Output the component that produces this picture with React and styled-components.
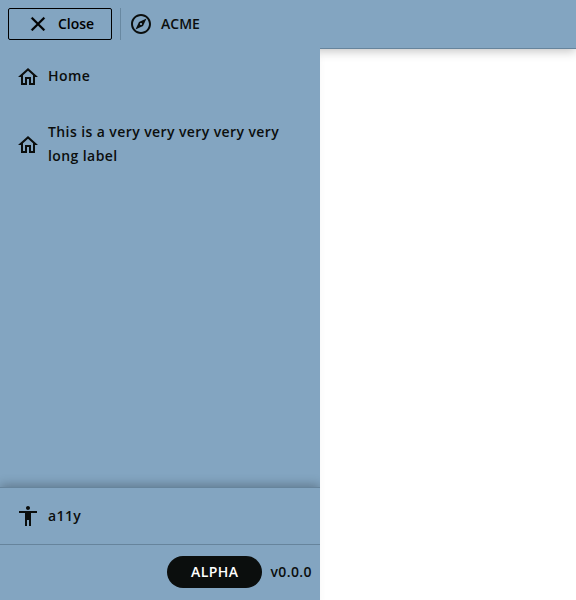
import React from "react";
import styled, { createGlobalStyle } from "styled-components";

const Global = createGlobalStyle`
  *, *::before, *::after { box-sizing: border-box; }
  body {
    margin: 0;
    background: #fff;
    color: #0b0e0d;
    font-family: "Open Sans", "Noto Sans", sans-serif;
    font-size: 14px;
    font-weight: 600;
  }
`;

const Page = styled.div`
  display: grid;
  grid-template-rows: 49px 1fr;
  height: 100vh;
  overflow: hidden;
`;

const Header = styled.header`
  display: flex;
  align-items: center;
  padding: 0 8px;
  background: #83a5c1;
  border-bottom: 1px solid #66849c;
  box-shadow: 0 2px 10px rgba(0, 0, 0, 0.25);
`;

const CloseButton = styled.button`
  display: flex;
  align-items: center;
  justify-content: center;
  gap: 8px;
  width: 104px;
  height: 32px;
  padding: 0;
  border: 1px solid #000;
  border-radius: 2px;
  background: transparent;
  color: #000;
  font: inherit;
  line-height: 20px;
`;

const Divider = styled.span`
  width: 1px;
  height: 32px;
  margin: 0 8px;
  background: #6888a1;
`;

const Brand = styled.div`
  display: flex;
  align-items: center;
  gap: 8px;
  line-height: 20px;
`;

const Label = styled.span`
  padding-bottom: 1px;
`;

const Icon = styled.svg`
  flex: none;
  width: 24px;
  height: 24px;
  fill: currentColor;
  stroke: currentColor;
  stroke-width: ${({ $stroke }) => $stroke || 0};
`;

const Drawer = styled.aside`
  display: flex;
  flex-direction: column;
  width: 320px;
  min-height: 0;
  margin-top: -1px;
  z-index: 1;
  background: #83a5c1;
  box-shadow: 0 8px 8px rgba(0, 0, 0, 0.04);
`;

const Nav = styled.nav`
  flex: 1;
`;

const NavItem = styled.a`
  display: flex;
  align-items: center;
  gap: 8px;
  padding: 16px;
  line-height: 24px;
  letter-spacing: 0.41px;
`;

const Footer = styled.div`
  border-top: 1px solid #66849c;
  box-shadow: 0 -2px 10px rgba(0, 0, 0, 0.28);
  clip-path: inset(-16px 0 0 0);
`;

const VersionBar = styled.div`
  display: flex;
  align-items: center;
  justify-content: flex-end;
  gap: 8px;
  height: 56px;
  padding: 0 8px 1px;
  border-top: 1px solid #66849c;
  letter-spacing: 0.41px;
`;

const Version = styled.span`
  line-height: 32px;
`;

const Badge = styled.span`
  height: 32px;
  padding: 0 24px;
  border-radius: 16px;
  background: #0b0e0d;
  color: #fff;
  line-height: 32px;
`;

const icons = {
  close: {
    stroke: 0.2,
    d: "M19 6.41 17.59 5 12 10.59 6.41 5 5 6.41 10.59 12 5 17.59 6.41 19 12 13.41 17.59 19 19 17.59 13.41 12z",
  },
  explore: {
    d: "M12 2C6.48 2 2 6.48 2 12s4.48 10 10 10 10-4.48 10-10S17.52 2 12 2zm0 18c-4.41 0-8-3.59-8-8s3.59-8 8-8 8 3.59 8 8-3.59 8-8 8zm-5.5-2.5 7.51-3.49L17.5 6.5 9.99 9.99 6.5 17.5zm5.5-6.6c.61 0 1.1.49 1.1 1.1s-.49 1.1-1.1 1.1-1.1-.49-1.1-1.1.49-1.1 1.1-1.1z",
  },
  home: {
    viewBox: "0 -1 24 24",
    d: "m12 5.69 5 4.5V18h-2v-6H9v6H7v-7.81l5-4.5M12 3 2 12h3v8h6v-6h2v6h6v-8h3L12 3z",
  },
  person: {
    d: "M12 2c1.1 0 2 .9 2 2s-.9 2-2 2-2-.9-2-2 .9-2 2-2zm9 7h-6v13h-2v-6h-2v6H9V9H3V7h18v2z",
  },
};

const Glyph = ({ name }) => {
  const { d, viewBox = "0 0 24 24", stroke } = icons[name];
  return (
    <Icon viewBox={viewBox} $stroke={stroke} aria-hidden="true">
      <path d={d} />
    </Icon>
  );
};

export default function App() {
  return (
    <>
      <Global />
      <Page>
        <Header>
          <CloseButton>
            <Glyph name="close" />
            <Label>Close</Label>
          </CloseButton>
          <Divider />
          <Brand>
            <Glyph name="explore" />
            <Label>ACME</Label>
          </Brand>
        </Header>
        <Drawer>
          <Nav>
            <NavItem>
              <Glyph name="home" />
              Home
            </NavItem>
            <NavItem>
              <Glyph name="home" />
              This is a very very very very very long label
            </NavItem>
          </Nav>
          <Footer>
            <NavItem>
              <Glyph name="person" />
              a11y
            </NavItem>
            <VersionBar>
              <Badge>ALPHA</Badge>
              <Version>v0.0.0</Version>
            </VersionBar>
          </Footer>
        </Drawer>
      </Page>
    </>
  );
}
